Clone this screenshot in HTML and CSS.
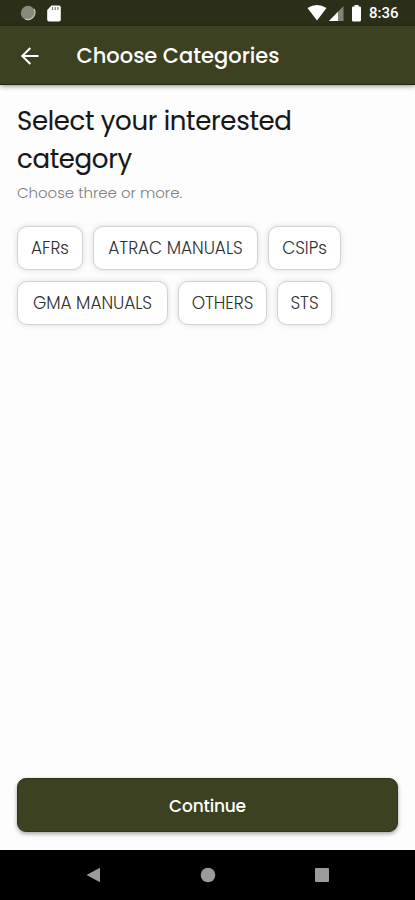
FILE: index.html
```html
<!DOCTYPE html>
<html lang="en">
<head>
<meta charset="utf-8">
<meta name="viewport" content="width=device-width, initial-scale=1">
<title>Choose Categories</title>
<link rel="stylesheet" href="styles.css">
</head>
<body>
<div class="status">
  <svg class="status-left" width="46" height="26" viewBox="0 0 46 26">
    <circle cx="8" cy="13" r="7.2" fill="#858a7b"/>
    <path d="M14 8.900A7.200 7.200 0 0 1 5 19" fill="none" stroke="#c3c7bd" stroke-width="1.200"/>
    <path d="M31.500 5.500H39a1.800 1.800 0 0 1 1.800 1.800v12.400a1.800 1.800 0 0 1-1.800 1.800H29a1.800 1.800 0 0 1-1.800-1.800V10z" fill="#fff"/>
    <path d="M32.500 7v3M35.200 7v3M37.900 7v3" stroke="#777b70" stroke-width="1.200"/>
  </svg>
  <svg class="status-right" width="58" height="26" viewBox="0 0 58 26">
    <path d="M.5 8Q10 2 19.500 8L10 20.500z" fill="#fff"/>
    <path d="M36.500 6v15H22z" fill="#7f8478"/>
    <path d="M31 11.700V21h-9z" fill="#fff"/>
    <path d="M47.500 5h4v1.500h1.300a1.200 1.200 0 0 1 1.200 1.200v12.600a1.200 1.200 0 0 1-1.200 1.200h-6.600a1.200 1.200 0 0 1-1.200-1.200V7.700a1.200 1.200 0 0 1 1.200-1.200h1.300z" fill="#fff"/>
  </svg>
  <span class="time">8:36</span>
</div>
<header class="bar">
  <svg class="back" width="20" height="20" viewBox="0 0 20 20" fill="none" stroke="#fff" stroke-width="2">
    <path d="M18.500 10H3M10.300 2L2.300 10l8 8"/>
  </svg>
  <h1 class="title">Choose Categories</h1>
</header>
<main class="content">
  <h2 class="heading"><span class="line-one">Select your interested</span> <span class="line-two">category</span></h2>
  <p class="hint">Choose three or more.</p>
  <div class="chips">
    <button class="chip chip-afrs">AFRs</button>
    <button class="chip chip-atrac">ATRAC MANUALS</button>
    <button class="chip chip-csips">CSIPs</button>
    <button class="chip chip-gma">GMA MANUALS</button>
    <button class="chip chip-others">OTHERS</button>
    <button class="chip chip-sts">STS</button>
  </div>
  <button class="continue">Continue</button>
</main>
<nav class="nav">
  <svg width="16" height="16" viewBox="0 0 16 16"><path d="M.5 8L14 .7v14.600z" fill="#9b9b9b"/></svg>
  <svg width="16" height="16" viewBox="0 0 16 16"><circle cx="8" cy="8" r="7.300" fill="#9b9b9b"/></svg>
  <svg width="16" height="16" viewBox="0 0 16 16"><rect x="1" y="1" width="14" height="14" rx="1" fill="#9b9b9b"/></svg>
</nav>
</body>
</html>
```
FILE: styles.css
```css
* { box-sizing: border-box; }
body {
  margin: 0;
  height: 900px;
  display: flex;
  flex-direction: column;
  overflow: hidden;
  background: #fdfdfd;
  font-family: Poppins, Inter, sans-serif;
  color: #171717;
}
h1, h2, p { margin: 0; }
button { font-family: inherit; padding: 0; }
.status {
  height: 26px;
  flex: none;
  display: flex;
  align-items: center;
  padding: 0 16px 0 20px;
  background: #2b2e19;
}
.status-right { margin-left: auto; }
.time {
  width: 30px;
  margin-left: 4px;
  font: 500 15px/26px Roboto, sans-serif;
  color: #fff;
  white-space: nowrap;
}
.bar {
  height: 59px;
  flex: none;
  display: flex;
  align-items: center;
  padding: 1px 0 0 20px;
  background: #3b4121;
  border-bottom: 1px solid #1b2905;
  box-shadow: 0 1px 5px rgba(0, 0, 0, .45);
}
.title {
  margin-left: 36.500px;
  font-size: 21px;
  font-weight: 500;
  line-height: 30px;
  color: #fff;
}
.content {
  flex: 1;
  display: flex;
  flex-direction: column;
  padding: 17px 17px 18px;
}
.heading {
  font-size: 26px;
  font-weight: 400;
  line-height: 38px;
  letter-spacing: -.33px;
  -webkit-text-stroke: .1px #171717;
}
.line-one, .line-two { display: block; }
.hint {
  font-size: 15px;
  font-weight: 300;
  line-height: 24px;
  margin-top: 3px;
  letter-spacing: -.04px;
  color: #808080;
}
.chips {
  display: flex;
  flex-wrap: wrap;
  gap: 11px 10px;
  margin-top: 21px;
}
.chip {
  height: 44px;
  border: 1px solid #d2d2d2;
  border-radius: 10px;
  background: #fff;
  box-shadow: 0 0 6px rgba(0, 0, 0, .13);
  padding-bottom: 1px;
  font-size: 17px;
  font-weight: 300;
  letter-spacing: -.05px;
  color: #303030;
  white-space: nowrap;
}
.chip-afrs { width: 66px; }
.chip-atrac { width: 165px; }
.chip-csips { width: 73px; }
.chip-gma { width: 151px; }
.chip-others { width: 89px; }
.chip-sts { width: 55px; }
.continue {
  height: 54px;
  margin-top: auto;
  border: 1px solid #2e3816;
  border-radius: 9px;
  background: #3b4121;
  box-shadow: 0 2px 4px rgba(0, 0, 0, .35);
  padding-top: 1px;
  font-size: 17px;
  font-weight: 500;
  letter-spacing: -.2px;
  color: #fff;
}
.nav {
  height: 50px;
  flex: none;
  display: flex;
  justify-content: center;
  gap: 98px;
  align-items: center;
  background: #000;
}
```
